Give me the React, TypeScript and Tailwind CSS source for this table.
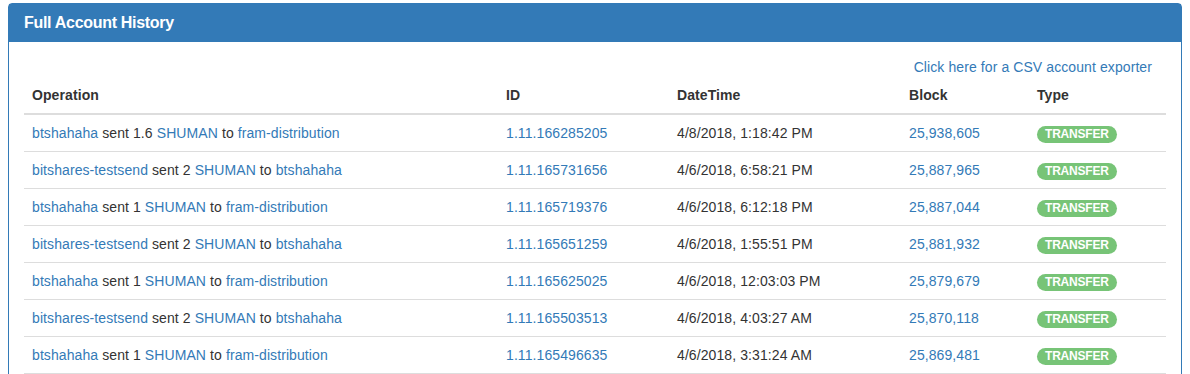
const rows = [
  { from: "btshahaha", amount: "1.6", to: "fram-distribution", id: "1.11.166285205", time: "4/8/2018, 1:18:42 PM", block: "25,938,605" },
  { from: "bitshares-testsend", amount: "2", to: "btshahaha", id: "1.11.165731656", time: "4/6/2018, 6:58:21 PM", block: "25,887,965" },
  { from: "btshahaha", amount: "1", to: "fram-distribution", id: "1.11.165719376", time: "4/6/2018, 6:12:18 PM", block: "25,887,044" },
  { from: "bitshares-testsend", amount: "2", to: "btshahaha", id: "1.11.165651259", time: "4/6/2018, 1:55:51 PM", block: "25,881,932" },
  { from: "btshahaha", amount: "1", to: "fram-distribution", id: "1.11.165625025", time: "4/6/2018, 12:03:03 PM", block: "25,879,679" },
  { from: "bitshares-testsend", amount: "2", to: "btshahaha", id: "1.11.165503513", time: "4/6/2018, 4:03:27 AM", block: "25,870,118" },
  { from: "btshahaha", amount: "1", to: "fram-distribution", id: "1.11.165496635", time: "4/6/2018, 3:31:24 AM", block: "25,869,481" },
];

export default function App() {
  return (
    <div className="min-h-screen bg-white pt-[3px] px-2 text-[14px] leading-5 tracking-[0.09px] text-[#333] font-['Liberation_Sans',Arial,sans-serif]">
      <div className="border border-[#337ab7] rounded-t-[4px]">
        {/* heading */}
        <div className="bg-[#337ab7] px-[15px] py-[10px] text-white">
          <h3 className="text-[16px] leading-[18px] font-bold tracking-[-0.3px]">Full Account History</h3>
        </div>

        {/* body */}
        <div className="p-[15px] pb-0">
          <div className="text-right pr-[14px]">
            <a className="text-[#337ab7]">Click here for a CSV account exporter</a>
          </div>
          <table className="w-full border-collapse text-left">
            <thead>
              <tr className="border-b-2 border-[#ddd]">
                <th className="w-[474px] p-2 font-bold">Operation</th>
                <th className="w-[171px] p-2 font-bold">ID</th>
                <th className="w-[232px] p-2 font-bold">DateTime</th>
                <th className="w-[128px] p-2 font-bold">Block</th>
                <th className="p-2 font-bold">Type</th>
              </tr>
            </thead>
            <tbody>
              {rows.map((r) => (
                <tr key={r.id} className="border-b border-[#ddd]">
                  <td className="p-2">
                    <a className="text-[#337ab7]">{r.from}</a> sent {r.amount}{" "}
                    <a className="text-[#337ab7]">SHUMAN</a> to{" "}
                    <a className="text-[#337ab7]">{r.to}</a>
                  </td>
                  <td className="p-2">
                    <a className="text-[#337ab7]">{r.id}</a>
                  </td>
                  <td className="p-2">{r.time}</td>
                  <td className="p-2">
                    <a className="text-[#337ab7]">{r.block}</a>
                  </td>
                  <td className="p-2">
                    <span className="inline-flex h-[17px] items-center rounded-full bg-[#77c477] px-[8px] text-[12px] font-bold tracking-[-0.2px] text-white">
                      TRANSFER
                    </span>
                  </td>
                </tr>
              ))}
            </tbody>
          </table>
        </div>
      </div>
    </div>
  );
}
